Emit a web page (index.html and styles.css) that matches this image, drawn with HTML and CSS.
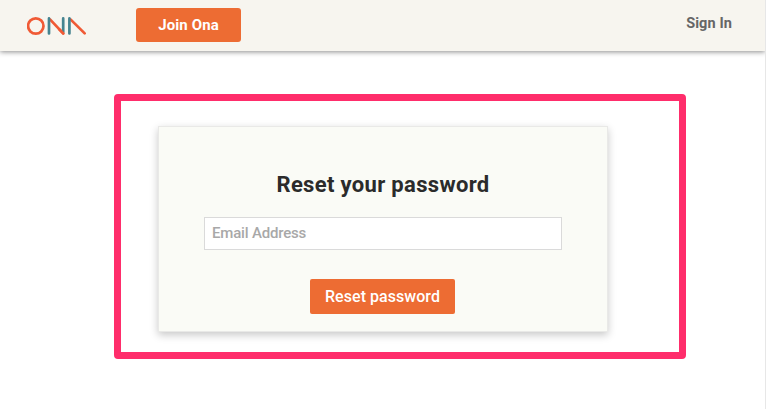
FILE: index.html
```html
<!DOCTYPE html>
<html lang="en">
<head>
<meta charset="utf-8">
<title>Reset your password</title>
<link rel="stylesheet" href="styles.css">
</head>
<body>
<div class="page">
  <header class="topbar">
    <svg class="logo" width="60" height="20" viewBox="0 0 60 20" fill="none" stroke-width="2.7" stroke-linecap="round">
      <circle cx="8.8" cy="10" r="7.7" stroke="#f05a35"/>
      <path d="M23 3.4L36.2 17.4M43.5 3.4L57.7 17.4" stroke="#f05a35"/>
      <path d="M22 2.4V17.4M36.2 2.4V16M42.4 2.4V17.4" stroke="#468490"/>
      <path d="M32.2 13.2L36.2 17.4" stroke="#f05a35"/>
    </svg>
    <a class="join"><span>Join Ona</span></a>
    <a class="signin">Sign In</a>
  </header>
  <main class="highlight">
    <form class="card">
      <h1>Reset your password</h1>
      <input class="email" type="email" placeholder="Email Address" aria-label="Email Address">
      <button class="submit" type="button">Reset password</button>
    </form>
  </main>
</div>
</body>
</html>
```
FILE: styles.css
```css
* { box-sizing: border-box; }
body {
  margin: 0;
  background: #fff;
  font-family: Roboto, "Liberation Sans", sans-serif;
  overflow: hidden;
}
.page {
  width: 766px;
  height: 409px;
  border-right: 1px solid #e7e7e7;
}
.topbar {
  display: flex;
  align-items: flex-start;
  height: 51px;
  padding: 8px 33px 0 27px;
  background: #f7f5ef;
  box-shadow: 0 1px 5px rgba(0, 0, 0, .45);
  clip-path: inset(0 0 -10px 0);
}
.logo { margin-top: 8px; }
.join {
  width: 105px;
  height: 34px;
  margin-left: 49px;
  border-radius: 3px;
  background: #ed6c33;
  color: #fff;
  font-size: 15px;
  font-weight: 700;
  line-height: 34px;
  letter-spacing: .1px;
  text-align: center;
}
.signin {
  margin-left: auto;
  color: #666;
  font-size: 14.5px;
  font-weight: 700;
  line-height: 31px;
  letter-spacing: .1px;
}
.highlight {
  width: 572px;
  height: 265px;
  margin: 43px 0 0 114px;
  padding: 25px 0 0 37px;
  border: 7px solid #ff2d6b;
  border-radius: 4px;
}
.card {
  display: flex;
  flex-direction: column;
  align-items: center;
  width: 450px;
  height: 206px;
  border: 1px solid #e9e9e7;
  background: #fafbf6;
  box-shadow: 0 3px 8px rgba(0, 0, 0, .22);
}
h1 {
  margin: 43px 0 0;
  color: #2b2b2b;
  font-size: 22px;
  font-weight: 700;
  line-height: 30px;
  letter-spacing: .33px;
  white-space: nowrap;
}
.email {
  width: 358px;
  height: 33px;
  margin: 17px 0 0;
  padding: 0 7px 2px;
  border: 1px solid #dadada;
  background: #fff;
  font: 500 15px Roboto, sans-serif;
  letter-spacing: -.18px;
}
.email::placeholder { color: #a8a8a8; opacity: 1; }
.submit {
  width: 145px;
  height: 35px;
  margin: 29px 1px 0 0;
  padding: 0;
  border: 0;
  border-radius: 2px;
  background: #ed6c33;
  color: #fff;
  font: 500 16px Roboto, sans-serif;
  letter-spacing: .05px;
}
```
